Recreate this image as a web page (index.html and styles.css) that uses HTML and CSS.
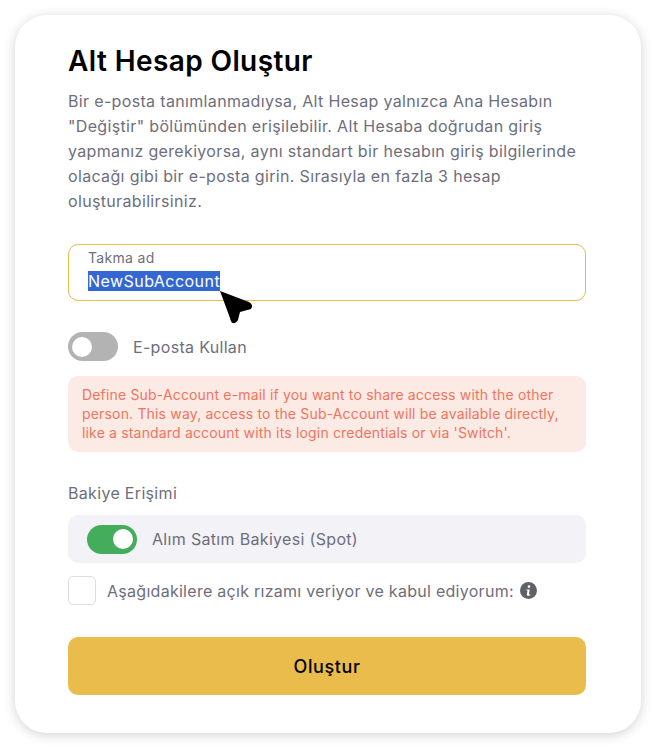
FILE: index.html
```html
<!DOCTYPE html>
<html lang="en">
<head>
    <meta charset="UTF-8">
    <meta name="viewport" content="width=device-width, initial-scale=1.0">
    <title>Alt Hesap Oluştur</title>
    <link rel="stylesheet" href="styles.css">
</head>
<body>
    <div class="card">
        <h1 class="title">Alt Hesap Oluştur</h1>
        <p class="intro">Bir e-posta tanımlanmadıysa, Alt Hesap yalnızca Ana Hesabın "Değiştir" bölümünden erişilebilir. Alt Hesaba doğrudan giriş yapmanız gerekiyorsa, aynı standart bir hesabın giriş bilgilerinde olacağı gibi bir e-posta girin. Sırasıyla en fazla 3 hesap oluşturabilirsiniz.</p>

        <div class="field">
            <div class="field-label">Takma ad</div>
            <div class="field-value"><span class="selected">NewSubAccount</span></div>
            <svg class="pointer" width="34" height="34" viewBox="0 0 34 34">
                <path d="M0 0 L29 11 Q34 14 31 18 L20 21 L18 29 Q16 33 13 32 Q11 32 10 27 Z" fill="#000"/>
            </svg>
        </div>

        <div class="switch-row">
            <span class="switch"><span class="knob"></span></span>
            <span class="switch-label">E-posta Kullan</span>
        </div>

        <div class="notice">Define Sub-Account e-mail if you want to share access with the other person. This way, access to the Sub-Account will be available directly, like a standard account with its login credentials or via 'Switch'.</div>

        <div class="section-label">Bakiye Erişimi</div>
        <div class="balance-row">
            <span class="switch on"><span class="knob"></span></span>
            <span class="switch-label">Alım Satım Bakiyesi (Spot)</span>
        </div>

        <div class="consent">
            <span class="checkbox"></span>
            <span class="consent-text">Aşağıdakilere açık rızamı veriyor ve kabul ediyorum:</span>
            <svg class="info" width="17" height="17" viewBox="0 0 17 17">
                <circle cx="8.5" cy="8.5" r="8.5" fill="#5f6368"/>
                <circle cx="9" cy="4.6" r="1.3" fill="#fff"/>
                <path d="M6.6 7.4 H9.7 L8.9 11.9 Q8.8 12.5 9.5 12.4 L10.3 12.2 V13.2 Q9 13.7 8 13.7 Q6.6 13.7 6.9 12.2 L7.5 8.6 L6.6 8.4 Z" fill="#fff"/>
            </svg>
        </div>

        <button class="submit">Oluştur</button>
    </div>
</body>
</html>
```

FILE: styles.css
```css
* {
    box-sizing: border-box;
}
body {
    margin: 0;
    padding: 15px;
    background: #fff;
    font-family: Inter, "Liberation Sans", sans-serif;
    letter-spacing: 0.32px;
}
.card {
    width: 626px;
    height: 718px;
    padding: 28px 55px 0 53px;
    background: #fff;
    border-radius: 32px;
    box-shadow: 0 2px 12px rgba(0,0,0,0.18);
}
.title {
    margin: 0;
    font-size: 28px;
    line-height: 36px;
    font-weight: 600;
    letter-spacing: 0.4px;
    color: #000;
}
.intro {
    margin: 10px 0 0;
    font-size: 16px;
    line-height: 25px;
    letter-spacing: 0.34px;
    color: #6e6e7c;
}
.field {
    position: relative;
    height: 57px;
    margin-top: 30px;
    padding: 4px 19px;
    border: 1px solid #e9bc4c;
    border-radius: 10px;
}
.field-label {
    font-size: 14px;
    line-height: 17px;
    color: #6e6e7c;
}
.field-value {
    margin-top: 5px;
    font-size: 16px;
    line-height: 20px;
    letter-spacing: 0.45px;
    color: #fff;
}
.selected {
    display: inline-block;
    background: #3367d1;
}
.pointer {
    position: absolute;
    left: 151px;
    top: 46px;
}
.switch-row {
    display: flex;
    align-items: center;
    margin-top: 31px;
}
.switch {
    display: flex;
    align-items: center;
    width: 50px;
    height: 29px;
    padding: 0 4px;
    background: #b3b3b3;
    border-radius: 15px;
}
.switch.on {
    justify-content: flex-end;
    background: #44ad5c;
}
.knob {
    width: 20px;
    height: 20px;
    background: #fff;
    border-radius: 50%;
}
.switch-label {
    margin-left: 15px;
    font-size: 16px;
    color: #6e6e7c;
}
.notice {
    height: 76px;
    margin-top: 15px;
    padding: 9px 14px 0;
    background: #fceae4;
    border-radius: 10px;
    font-size: 14px;
    line-height: 19px;
    letter-spacing: 0.17px;
    color: #f0755f;
}
.section-label {
    margin-top: 31px;
    font-size: 16px;
    line-height: 20px;
    color: #6e6e7c;
}
.balance-row {
    display: flex;
    align-items: center;
    height: 48px;
    margin-top: 12px;
    padding-left: 19px;
    background: #f2f2f7;
    border-radius: 10px;
}
.consent {
    display: flex;
    align-items: center;
    margin-top: 13px;
}
.checkbox {
    width: 28px;
    height: 29px;
    background: #fff;
    border: 1px solid #dcdce4;
    border-radius: 5px;
}
.consent-text {
    margin-left: 11px;
    font-size: 16px;
    letter-spacing: 0.28px;
    color: #6e6e7c;
}
.info {
    margin-left: 6px;
}
.submit {
    display: block;
    width: 100%;
    height: 58px;
    margin-top: 32px;
    background: #e9bc4c;
    border: none;
    border-radius: 10px;
    font-family: Inter, "Liberation Sans", sans-serif;
    font-size: 18px;
    font-weight: 500;
    letter-spacing: 0.6px;
    color: #000;
}
```
